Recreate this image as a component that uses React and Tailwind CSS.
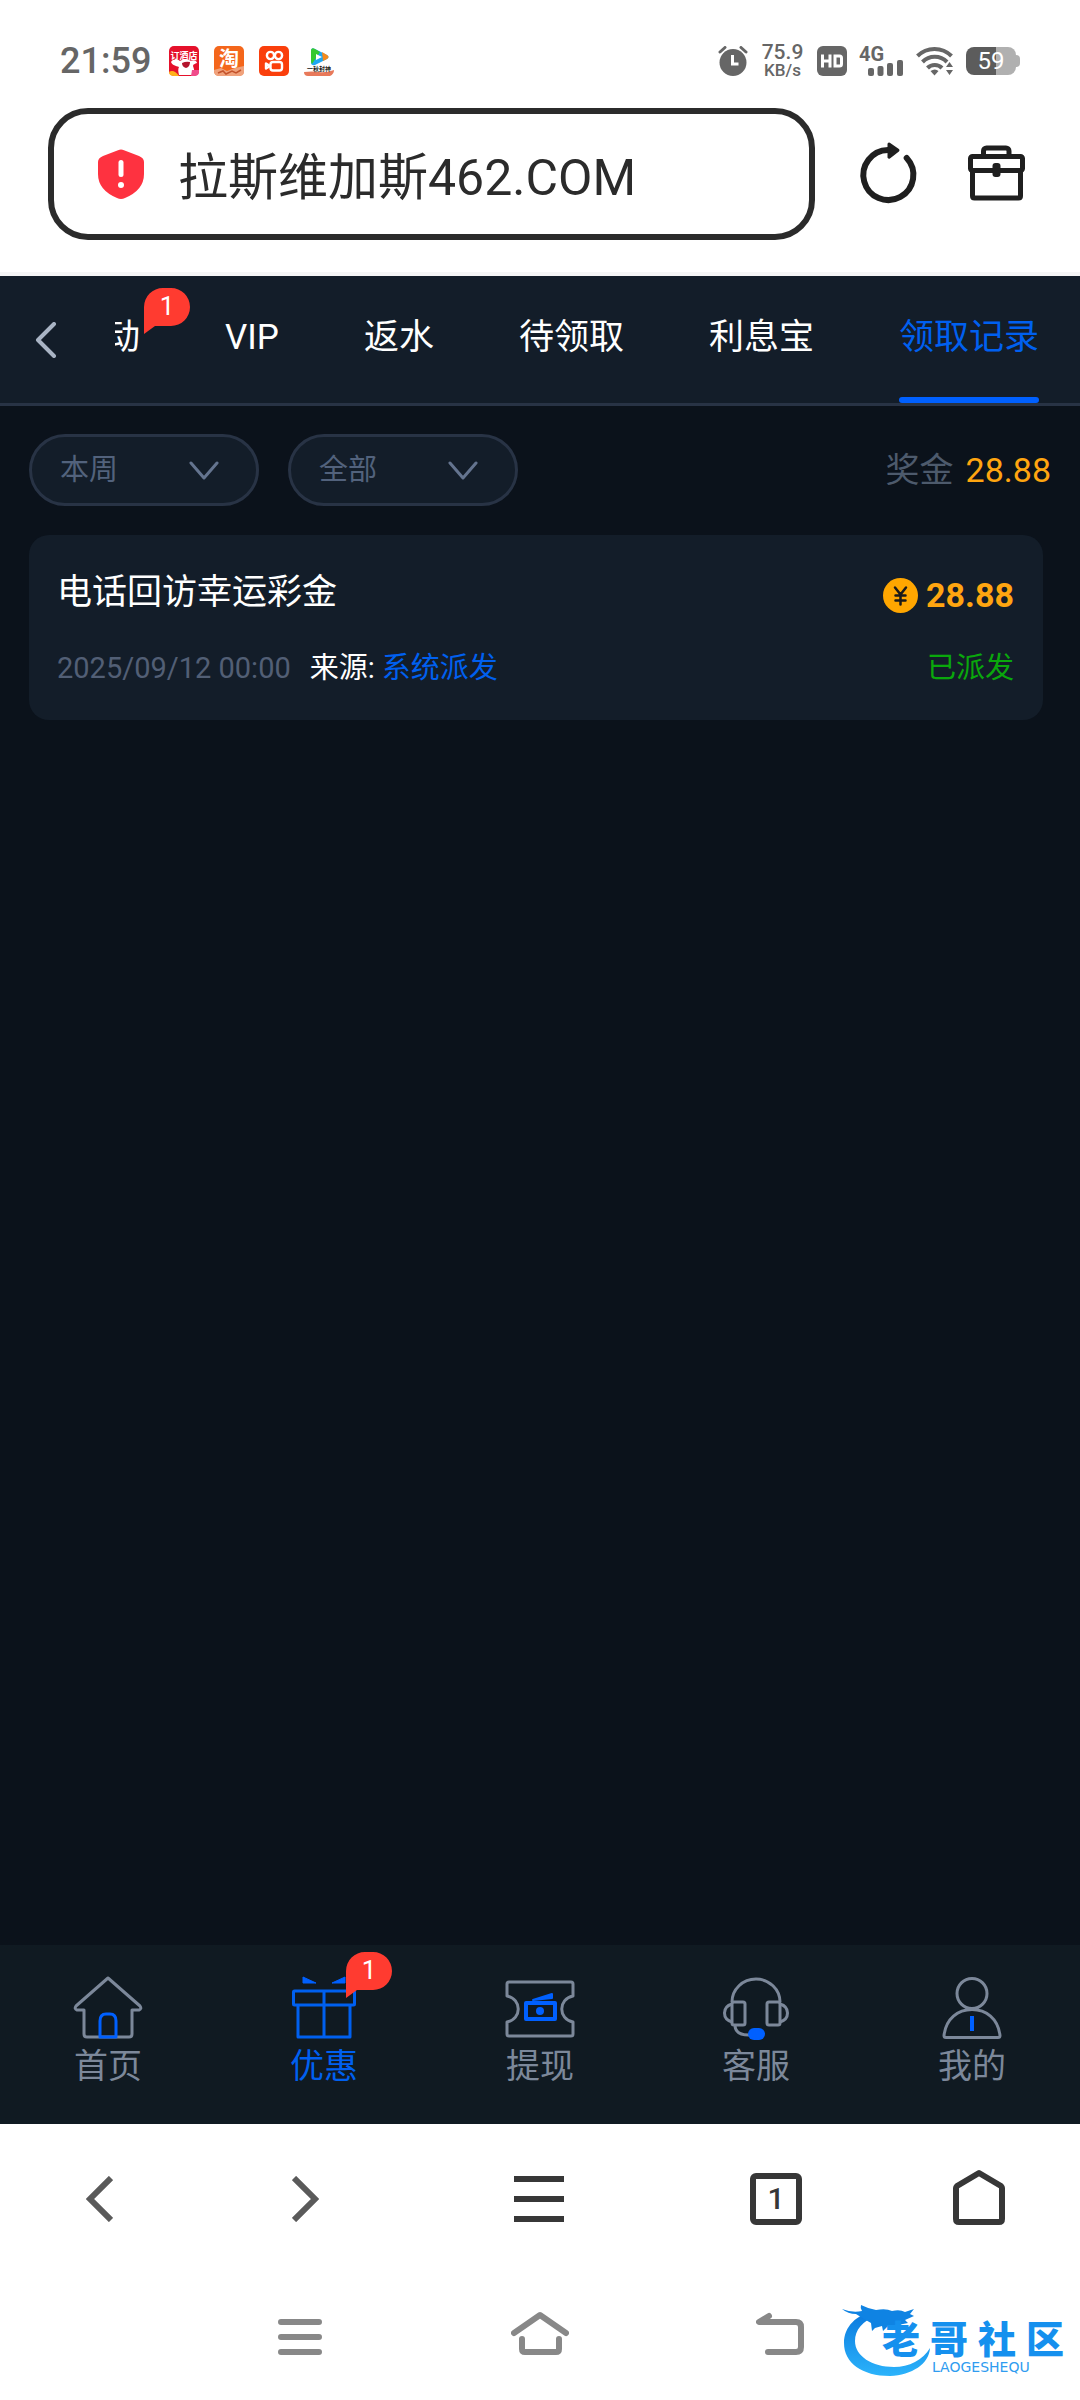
import { useState } from 'react'

const tabs = [
  { name: '活动', badge: 1 },
  { name: 'VIP' },
  { name: '返水' },
  { name: '待领取' },
  { name: '利息宝' },
  { name: '领取记录' },
]

const records = [
  {
    title: '电话回访幸运彩金',
    time: '2025/09/12 00:00',
    source: '系统派发',
    amount: '28.88',
    status: '已派发',
  },
]

function Badge({ children }) {
  return (
    <span className="absolute h-[46px] w-[46px] text-center text-[26px] leading-9 text-white">
      <svg viewBox="0 0 46 46" className="absolute inset-0 h-full w-full" fill="#ff3b30" aria-hidden="true">
        <path d="M0 46V19A19 19 0 0 1 19 0h8a19 19 0 0 1 0 38H11z" />
      </svg>
      <span className="relative">{children}</span>
    </span>
  )
}

function AppIcons() {
  return (
    <div className="ml-[18px] flex gap-[15px]">
      <svg width="30" height="30" viewBox="0 0 30 30" aria-hidden="true">
        <rect width="30" height="30" rx="5" fill="#e5112b" />
        <text x="15" y="13" fontSize="9" fontWeight="700" fill="#fff" textAnchor="middle">订酒店</text>
        <path d="M2 16c2-3 6-3 9-1 3-2 8-2 11 0 3-2 6 0 6 2-2 1-4 1-4 3 1 3 2 6 1 9H10c-1-4-1-6 0-8-3-1-7-2-8-5z" fill="#fff" />
        <path d="M13 17q4-2 8-1 0 5-4 6-4-1-4-5z" fill="#b3142c" />
        <path d="M0 26q5-3 10 4H5q-5 0-5-4z" fill="#ffb21a" />
        <path d="M23 24h7v2q0 4-5 4h-3z" fill="#f04c8b" />
      </svg>
      <svg width="30" height="30" viewBox="0 0 30 30" aria-hidden="true">
        <rect width="30" height="30" rx="5" fill="#f4661b" />
        <path d="M0 24l7-2 6 3 8-3 9-2v6q0 4-5 4H5q-5 0-5-5z" fill="#f0a27c" />
        <path d="M4 27l5-2 3 3 6-3 4 2 5-3" fill="none" stroke="#c4532b" strokeWidth="1.5" />
        <text x="15" y="20" fontSize="20" fontWeight="700" fill="#fff" textAnchor="middle">淘</text>
      </svg>
      <svg width="30" height="30" viewBox="0 0 30 30" fill="none" stroke="#fff" strokeWidth="2.4" aria-hidden="true">
        <rect width="30" height="30" rx="5" fill="#fa3f0c" stroke="none" />
        <circle cx="11.5" cy="9.5" r="3.6" />
        <circle cx="19.5" cy="9.5" r="3.6" />
        <rect x="11.5" y="16" width="11.5" height="8.5" rx="2.5" />
        <path d="M11 20l-4-2.5v5z" strokeLinejoin="round" />
      </svg>
      <svg width="30" height="30" viewBox="0 0 30 30" aria-hidden="true">
        <path d="M7 5q0-4 4-2l12 6q3 2 0 4l-12 6q-4 1-4-3z" fill="#1fa7f2" />
        <path d="M7 5q0-4 4-2l5 3-8 12q-1-1-1-3z" fill="#35c92f" />
        <path d="M18 6l5 3q3 2 0 4l-4 2z" fill="#f78a1b" />
        <path d="M12 8l6 3-6 3z" fill="#fff" />
        <path d="M0 26q8-1 15 0t15-2q0 4-4 6H4q-4 0-4-4z" fill="#e8795a" />
        <text x="15" y="25" fontSize="6" fontWeight="700" fill="#221c18" textAnchor="middle">一秋封神</text>
      </svg>
    </div>
  )
}

function StatusBar() {
  return (
    <div className="flex h-[42px] items-center px-[60px] text-[#666]">
      <span className="text-[36px] leading-[42px] font-medium">21:59</span>
      <AppIcons />
      <div className="ml-auto flex items-center gap-3">
        <svg width="30" height="30" viewBox="0 0 30 30" aria-hidden="true">
          <circle cx="15" cy="16.500" r="13.500" fill="#666" />
          <path d="M2 6l5-4.500M28 6l-5-4.500" stroke="#666" strokeWidth="3" strokeLinecap="round" />
          <path d="M14.500 9v9h6" fill="none" stroke="#fff" strokeWidth="3" />
        </svg>
        <span className="flex w-[45px] flex-col items-center font-medium">
          <span className="text-[21px] leading-[18px]">75.9</span>
          <span className="text-[17px] leading-[18px]">KB/s</span>
        </span>
        <svg width="30" height="30" viewBox="0 0 30 30" aria-label="HD">
          <rect width="30" height="30" rx="6" fill="#666" />
          <path d="M5.500 8.500v13M13 8.500v13M5.500 15H13M18 10h4.500q2 0 2 2v6q0 2-2 2H18z" fill="none" stroke="#fff" strokeWidth="3" />
        </svg>
        <svg width="45" height="36" viewBox="0 0 45 36" fill="#666" aria-label="4G">
          <text x="0" y="18" fontSize="20" fontWeight="700">4G</text>
          <rect x="9" y="25" width="6" height="8" rx="2" />
          <rect x="18.500" y="23" width="6" height="10" rx="2" />
          <rect x="28" y="20" width="6" height="13" rx="2" />
          <rect x="38" y="17" width="6" height="16" rx="2" />
        </svg>
        <svg width="38" height="30" viewBox="0 0 38 30" fill="none" stroke="#666" strokeWidth="4" aria-hidden="true">
          <path d="M1.500 10a24 24 0 0 1 34 0" />
          <path d="M6.500 16a17 17 0 0 1 24.500 0" />
          <path d="M11.500 22a10 10 0 0 1 14.500 0" />
          <path d="M14.500 25q4.500-3 8 0l-4 4.500z" fill="#666" stroke="none" />
          <path d="M30 21l3.500-5 3.500 5zM30 24l3.500 5 3.500-5z" fill="#666" stroke="none" />
        </svg>
        <div className="flex items-center">
          <span className="flex h-7 w-[50px] items-center justify-center rounded-lg bg-linear-to-r from-[#5c5c5c] from-60% to-[#b0b0b0] to-60% text-[24px] leading-7 text-white">
            59
          </span>
          <span className="h-3 w-1 rounded-r bg-[#b0b0b0]" />
        </div>
      </div>
    </div>
  )
}

function AddressBar() {
  return (
    <div className="mt-[26px] flex items-center pr-[55px] pl-12 text-[#1f1f1f]">
      <label className="flex h-[132px] min-w-0 flex-1 items-center rounded-[40px] border-6 border-[#2b2b2b] pl-11">
        <svg width="46" height="50" viewBox="0 0 46 50" className="shrink-0" aria-hidden="true">
          <path d="M20 1.200q3-1.400 6 0L41 7q5 2 5 6v12q0 16-19 24-4 2-8 0Q0 41 0 25V13q0-4 5-6z" fill="#fe3240" />
          <path d="M23 13.500v12" stroke="#fff" strokeWidth="5" strokeLinecap="round" />
          <circle cx="23" cy="36" r="3" fill="#fff" />
        </svg>
        <input
          aria-label="网址"
          defaultValue="拉斯维加斯462.COM"
          className="mt-2 ml-[34px] h-20 w-full min-w-0 bg-transparent text-[50px] leading-[80px] text-[#2b2b2b] outline-none"
        />
      </label>
      <button aria-label="刷新" className="ml-[45px]">
        <svg width="56" height="64" viewBox="0 2 56 64" className="overflow-visible" fill="none" stroke="currentColor" strokeWidth="6">
          <path d="M28 10a25 25 0 1 0 18.700 8" strokeLinecap="round" />
          <path d="M29 4l9 6.200-9 7z" fill="currentColor" strokeWidth="3" strokeLinejoin="round" />
        </svg>
      </button>
      <button aria-label="工具箱" className="ml-[52px]">
        <svg width="57" height="64" viewBox="0 0 57 64" fill="none" stroke="currentColor" strokeWidth="5" strokeLinejoin="round">
          <path d="M15.500 14V9a3 3 0 0 1 3-3H38a3 3 0 0 1 3 3v5" />
          <rect x="2.500" y="14.500" width="52" height="14" rx="2" />
          <path d="M4.500 28v26q0 2 2 2h44q2 0 2-2V28" />
          <rect x="24.500" y="21" width="8" height="14" rx="3" fill="currentColor" stroke="none" />
        </svg>
      </button>
    </div>
  )
}

function TabBar({ active, onChange }) {
  return (
    <div className="flex h-[130px] border-b-3 border-[#283345] bg-[#131d29]">
      <button aria-label="返回" className="flex w-[115px] shrink-0 items-center pl-[35px]">
        <svg width="22" height="36" viewBox="0 0 22 36" fill="none" stroke="#a9b4c4" strokeWidth="4" strokeLinecap="round" strokeLinejoin="round">
          <path d="M19 2L3 18l16 16" />
        </svg>
      </button>
      <nav className="flex min-w-0 flex-1 justify-end gap-[85px] overflow-hidden pr-[41px]">
        {tabs.map((t) => (
          <button
            key={t.name}
            onClick={() => onChange(t.name)}
            className={`relative h-full shrink-0 pb-[3px] text-[35px] leading-10 ${
              t.name === active ? 'text-[#0060f0]' : 'text-white'
            }`}
          >
            {t.name}
            {t.badge && (
              <span className="absolute top-3 left-full ml-1">
                <Badge>{t.badge}</Badge>
              </span>
            )}
            {t.name === active && (
              <span className="absolute inset-x-0 bottom-0 h-[6px] rounded-full bg-[#0060ff]" />
            )}
          </button>
        ))}
      </nav>
    </div>
  )
}

function Filter({ label, options }) {
  return (
    <div className="relative w-[230px]">
      <select
        aria-label={label}
        className="h-[72px] w-full appearance-none rounded-full border-3 border-[#283345] bg-[#131d29] pl-7 text-[29px] leading-10 text-[#52627c]"
      >
        {options.map((o) => (
          <option key={o}>{o}</option>
        ))}
      </select>
      <svg
        width="30"
        height="20"
        viewBox="0 0 30 20"
        className="pointer-events-none absolute top-[27px] right-10"
        fill="none"
        stroke="#64748f"
        strokeWidth="3"
        strokeLinecap="round"
        strokeLinejoin="round"
      >
        <path d="M2 2l13 15L28 2" />
      </svg>
    </div>
  )
}

function RecordCard({ record }) {
  return (
    <article className="mt-[29px] mr-[37px] ml-[29px] rounded-[20px] bg-[#131d29] pt-9 pr-[29px] pb-8 pl-7">
      <div className="flex items-center justify-between">
        <h2 className="text-[35px] leading-10 text-white">{record.title}</h2>
        <div className="flex items-center gap-2 pt-1 text-[#ffa510]">
          <svg width="35" height="35" viewBox="0 0 35 35" aria-hidden="true">
            <circle cx="17.500" cy="17.500" r="17.500" fill="#ffa600" />
            <path d="M12 9.500l5.500 7 5.500-7M17.500 17v9.500M12.500 17.500h10M12.500 22.500h10" fill="none" stroke="#1a1a1a" strokeWidth="2.500" strokeLinecap="round" />
          </svg>
          <span className="text-[34px] leading-10 font-bold">{record.amount}</span>
        </div>
      </div>
      <div className="mt-[33px] flex items-center text-[29px] leading-10">
        <time className="text-[#525f75]">{record.time}</time>
        <span className="ml-[19px] text-white">来源:</span>
        <span className="ml-[7px] text-[#0060f0]">{record.source}</span>
        <span className="ml-auto text-[#0aa80c]">{record.status}</span>
      </div>
    </article>
  )
}

function HomeIcon() {
  return (
    <>
      <path d="M36 2L4 30q-2 3 1 4h7v24q0 3 3 3h42q3 0 3-3V34h7q3-1 1-4z" />
      <path d="M28 61V45q0-7 6-7h4q6 0 6 7v16z" stroke="#0060ff" />
    </>
  )
}

function GiftIcon() {
  return (
    <>
      <rect x="5.500" y="15" width="61" height="14" rx="1" stroke="#0060f0" />
      <path d="M10 29v32h52V29M36 15v46" stroke="#0060f0" />
      <path d="M15 1l13 6H15zM57 1L44 7h13z" fill="#0060ff" stroke="#0060ff" strokeWidth="1" />
    </>
  )
}

function TicketIcon() {
  return (
    <>
      <path d="M5 6h62q2 0 2 2v12c-15 3-15 23 0 26v12q0 2-2 2H5q-2 0-2-2V46c15-3 15-23 0-26V8q0-2 2-2z" />
      <rect x="22" y="27" width="29" height="16" stroke="#0060ff" strokeWidth="4" />
      <circle cx="36" cy="35" r="4" fill="#0060ff" stroke="none" />
      <path d="M29 24l19-6v4z" stroke="#0060ff" fill="#0060ff" strokeWidth="2" />
    </>
  )
}

function ServiceIcon() {
  return (
    <>
      <path d="M12 26a24 23 0 0 1 48 0" />
      <rect x="12" y="26" width="13" height="23" rx="2" />
      <rect x="47" y="26" width="13" height="23" rx="2" />
      <path d="M12 28c-10 3-10 15 0 18M60 28c10 3 10 15 0 18M15 49q0 10 14 10" />
      <rect x="28" y="52" width="17" height="12" rx="6" fill="#0060ff" stroke="none" />
    </>
  )
}

function UserIcon() {
  return (
    <>
      <circle cx="36" cy="17.500" r="15" />
      <path d="M10 61.500q-2 0-2-2c2-17 14-26 28-26s26 9 28 26q0 2-2 2z" />
      <path d="M36 40v15" stroke="#0060ff" strokeWidth="4" />
    </>
  )
}

const menu = [
  { name: '首页', Icon: HomeIcon },
  { name: '优惠', Icon: GiftIcon, active: true, badge: 1 },
  { name: '提现', Icon: TicketIcon },
  { name: '客服', Icon: ServiceIcon },
  { name: '我的', Icon: UserIcon },
]

function BottomMenu() {
  return (
    <nav className="grid h-[179px] grid-cols-5 bg-[#101a22] pt-[31px]">
      {menu.map(({ name, Icon, active, badge }) => (
        <a
          key={name}
          href="#"
          className={`flex flex-col items-center text-[34px] leading-10 ${active ? 'text-[#0060f0]' : 'text-[#7c889a]'}`}
        >
          <span className="relative">
            <svg width="72" height="64" viewBox="0 0 72 64" fill="none" stroke="#7c889a" strokeWidth="3" strokeLinejoin="round" aria-hidden="true">
              <Icon />
            </svg>
            {badge && (
              <span className="absolute -top-6 left-[58px]">
                <Badge>{badge}</Badge>
              </span>
            )}
          </span>
          <span className="mt-[6px]">{name}</span>
        </a>
      ))}
    </nav>
  )
}

function BrowserBar() {
  return (
    <div className="grid h-[150px] grid-cols-[198fr_215fr_252fr_222fr_184fr] items-center pr-[9px] text-[#373737]">
      <button aria-label="后退" className="flex justify-center">
        <svg width="27" height="46" viewBox="0 0 27 46" fill="none" stroke="#5a5a5a" strokeWidth="6">
          <path d="M25 2L4 23l21 21" />
        </svg>
      </button>
      <button aria-label="前进" className="flex justify-center">
        <svg width="27" height="46" viewBox="0 0 27 46" fill="none" stroke="#5a5a5a" strokeWidth="6">
          <path d="M2 2l21 21L2 44" />
        </svg>
      </button>
      <button aria-label="菜单" className="flex justify-center">
        <svg width="50" height="46" viewBox="0 0 50 46" fill="currentColor">
          <path d="M0 0h50v6H0zM0 20h50v6H0zM0 40h50v6H0z" />
        </svg>
      </button>
      <button aria-label="标签页" className="flex justify-center">
        <span className="h-[52px] w-[52px] rounded-md border-6 border-current text-center text-[30px] leading-10 font-medium">1</span>
      </button>
      <button aria-label="主页" className="flex justify-center">
        <svg width="52" height="60" viewBox="0 0 52 60" fill="none" stroke="currentColor" strokeWidth="6" strokeLinejoin="round">
          <path d="M26 4l22 13q1 1 1 2v31q0 3-3 3H6q-3 0-3-3V19q0-1 1-2z" />
        </svg>
      </button>
    </div>
  )
}

function Watermark() {
  return (
    <div className="absolute right-4 bottom-5 h-[80px] w-[222px]">
      <svg viewBox="0 0 222 80" className="absolute inset-0 h-full w-full" aria-hidden="true">
        <defs>
          <linearGradient id="dragon" x1="0" y1="0" x2="0" y2="1">
            <stop offset="0" stopColor="#0a78dd" />
            <stop offset="1" stopColor="#2bb3fb" />
          </linearGradient>
        </defs>
        <path d="M34 11C14 14 2 27 2 43c0 20 18 33 46 33 22-1 39-12 40-28-7 12-21 19-36 19-22 0-39-11-39-26 0-11 7-20 23-26z" fill="url(#dragon)" />
        <path d="M0 9q10 4 20 2-2-3-1-6 8 4 15 5 10-2 16 1 8-2 13 1l9-3-4 5 4 2-9 4 3 3-10 2q-5 3-10 1l-5 5-1-5-7 2-3 3-1-8-7-4-8-5q-8 0-14-5z" fill="#0f83e3" />
      </svg>
      <div className="relative mt-[22px] ml-10 flex justify-between text-[38px] leading-9 font-black text-[#1590ee]">
        <span>老</span>
        <span>哥</span>
        <span>社</span>
        <span>区</span>
      </div>
      <div className="relative mt-[3px] ml-[90px] font-['DejaVu_Sans',sans-serif] text-[14px] leading-3 text-[#2f9cf0]">LAOGESHEQU</div>
    </div>
  )
}

function SystemBar() {
  return (
    <div className="relative grid h-[126px] grid-cols-3 items-center px-[180px] pb-2 text-[#888]">
      <button aria-label="最近任务" className="flex justify-center">
        <svg width="44" height="44" viewBox="0 0 44 44" fill="none" stroke="currentColor" strokeWidth="6" strokeLinecap="round">
          <path d="M3 11h38M3 26h38M3 41h38" />
        </svg>
      </button>
      <button aria-label="桌面" className="flex justify-center">
        <svg width="58" height="44" viewBox="0 0 58 44" fill="none" stroke="currentColor" strokeWidth="6" strokeLinecap="round" strokeLinejoin="round">
          <path d="M3 22L29 4l26 18M11 28v10q0 3 3 3h31q3 0 3-3V28" />
        </svg>
      </button>
      <button aria-label="返回上一页" className="flex justify-center">
        <svg width="48" height="44" viewBox="0 0 48 44" fill="none" stroke="currentColor" strokeWidth="6" strokeLinecap="round" strokeLinejoin="round">
          <path d="M13 5L3 11h37q5 0 5 5v20q0 5-5 5H12" />
        </svg>
      </button>
      <Watermark />
    </div>
  )
}

export default function App() {
  const [tab, setTab] = useState('领取记录')

  return (
    <div className="flex min-h-screen flex-col bg-white font-['Roboto','Noto_Sans_CJK_SC',sans-serif]">
      <header className="border-b-4 border-[#f5f5f6] pt-10 pb-8">
        <StatusBar />
        <AddressBar />
      </header>

      <main className="flex flex-1 flex-col bg-[#0b121b]">
        <TabBar active={tab} onChange={setTab} />
        <div className="mt-7 flex items-center gap-[29px] px-[29px]">
          <Filter label="时间" options={['本周', '本月']} />
          <Filter label="类型" options={['全部', '已派发']} />
          <p className="ml-auto text-[34px] leading-10 text-[#4d5a6c]">
            奖金<span className="ml-3 text-[#ffa510]">28.88</span>
          </p>
        </div>
        {records.map((r) => (
          <RecordCard key={r.title} record={r} />
        ))}
      </main>

      <BottomMenu />
      <BrowserBar />
      <SystemBar />
    </div>
  )
}
